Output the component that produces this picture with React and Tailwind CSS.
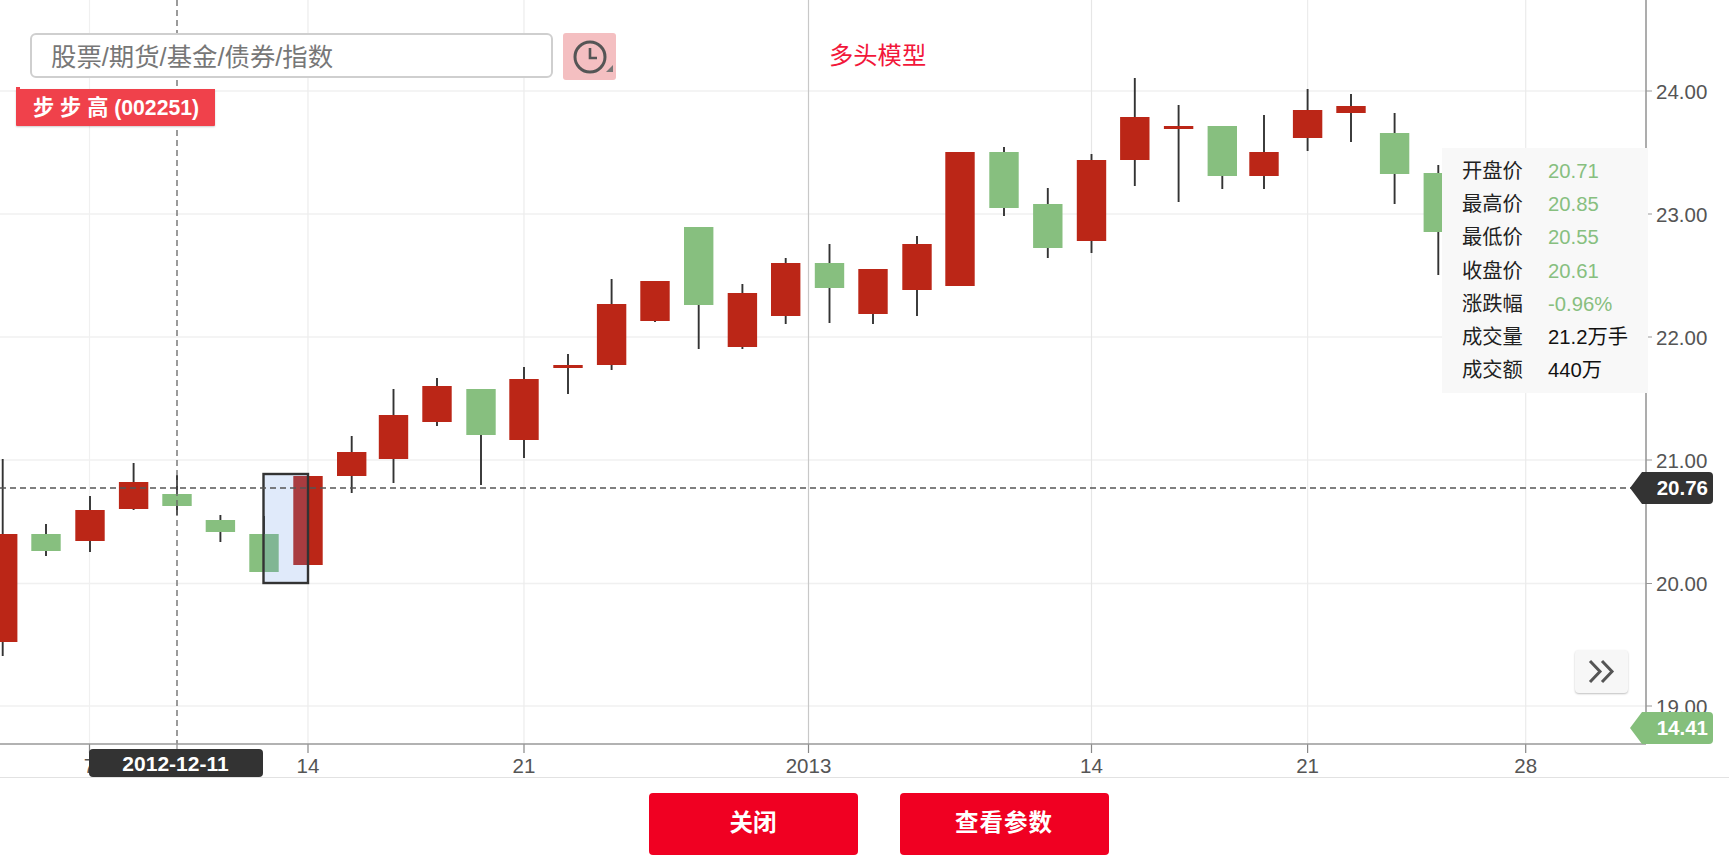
import React from 'react';

const RED = '#bb2617';
const GREEN = '#87bf7f';

// x, colour, body top, body bottom, wick top, wick bottom
const candles = [
    [2.7, RED, 534, 642, 459, 656],
    [46, GREEN, 534, 551, 524, 556],
    [90, RED, 510, 541, 496, 552],
    [133.6, RED, 482, 509, 463, 510],
    [177, GREEN, 494, 506, 475, 515],
    [220.4, GREEN, 520, 532, 515, 542],
    [264, GREEN, 534, 572, 516, 572],
    [308, RED, 476, 565, 476, 565],
    [351.7, RED, 452, 476, 436, 493],
    [393.5, RED, 415, 459, 389, 483],
    [437, RED, 386, 422, 378, 426],
    [481, GREEN, 389, 435, 389, 485],
    [524, RED, 379, 440, 367, 458],
    [568, RED, 365, 368, 354, 394],
    [611.6, RED, 304, 365, 279, 370],
    [655, RED, 281, 321, 281, 322],
    [698.7, GREEN, 227, 305, 227, 349],
    [742.4, RED, 293, 347, 284, 349],
    [785.7, RED, 263, 316, 258, 324],
    [829.5, GREEN, 263, 288, 244, 323],
    [873, RED, 269, 314, 269, 324],
    [917, RED, 244, 290, 236, 316],
    [960, RED, 152, 286, 152, 286],
    [1004, GREEN, 152, 208, 147, 216],
    [1047.8, GREEN, 204, 248, 188, 258],
    [1091.5, RED, 160, 241, 154, 253],
    [1134.8, RED, 117, 160, 78, 186],
    [1178.6, RED, 126, 129, 105, 202],
    [1222.3, GREEN, 126, 176, 126, 189],
    [1264, RED, 152, 176, 115, 189],
    [1307.6, RED, 110, 138, 89, 151],
    [1351, RED, 106, 113, 94, 142],
    [1394.6, GREEN, 133, 174, 113, 204],
    [1438.3, GREEN, 173, 232, 165, 275],
];

const priceLines = [
    [91, '24.00'],
    [214, '23.00'],
    [337, '22.00'],
    [460, '21.00'],
    [583.5, '20.00'],
    [706, '19.00'],
];

const dateLines = [
    [89.5, '7', '#f0f0f0'],
    [308, '14', '#ececec'],
    [524, '21', '#ececec'],
    [808.5, '2013', '#c8c8c8'],
    [1091.5, '14', '#e6e6e6'],
    [1307.6, '21', '#ececec'],
    [1525.7, '28', '#ececec'],
];

const quote = [
    ['开盘价', '20.71', true],
    ['最高价', '20.85', true],
    ['最低价', '20.55', true],
    ['收盘价', '20.61', true],
    ['涨跌幅', '-0.96%', true],
    ['成交量', '21.2万手', false],
    ['成交额', '440万', false],
];

const CandleChart = () => (
    <svg width="1729" height="778" className="block">
        {priceLines.map(([y]) => (
            <g key={y}>
                <line x1="0" x2="1646" y1={y} y2={y} stroke="#f0f0f0" strokeWidth="1.5" />
                <line x1="1646" x2="1652" y1={y} y2={y} stroke="#999" strokeWidth="1" />
            </g>
        ))}
        {dateLines.map(([x, , color]) => (
            <g key={x}>
                <line x1={x} x2={x} y1="0" y2="744" stroke={color} strokeWidth="1.2" />
                <line x1={x} x2={x} y1="744" y2="753" stroke="#888" strokeWidth="1.2" />
            </g>
        ))}
        <line x1="177" x2="177" y1="744" y2="753" stroke="#888" strokeWidth="1.2" />

        {candles.map(([x, color, top, bottom, wickTop, wickBottom]) => (
            <g key={x}>
                <line x1={x} x2={x} y1={wickTop} y2={wickBottom} stroke="#333" strokeWidth="1.9" />
                <rect x={x - 14.7} y={top} width="29.4" height={bottom - top} fill={color} />
            </g>
        ))}

        <rect x="263.5" y="474" width="44.5" height="109" fill="rgb(100 150 230 / 0.2)" stroke="#333" strokeWidth="2.4" />

        <line x1="177" x2="177" y1="0" y2="744" stroke="#666" strokeWidth="1.3" strokeDasharray="6 4" />
        <line x1="0" x2="1632" y1="488" y2="488" stroke="#555" strokeWidth="1.3" strokeDasharray="6 4" />

        <line x1="0" x2="1646" y1="744" y2="744" stroke="#999" strokeWidth="1.6" />
        <line x1="1646" x2="1646" y1="0" y2="744" stroke="#999" strokeWidth="1.6" />

        {priceLines.map(([y, label]) => (
            <text key={label} x="1656" y={y + 7.5} fontSize="20.5" fill="#555">{label}</text>
        ))}
        {dateLines.map(([x, label]) => (
            <text key={x} x={x} y="773" fontSize="20.5" fill="#555" textAnchor="middle">{label}</text>
        ))}
    </svg>
);

const PriceTag = ({ value, className }) => (
    <div className={`absolute left-[1630px] flex h-[32px] w-[83px] items-stretch ${className}`}>
        <svg width="16" height="32" className="shrink-0 fill-current">
            <polygon points="16,0 12,0 0,16 12,32 16,32" />
        </svg>
        <div className="flex flex-1 items-center justify-end rounded-r-[4px] bg-current pr-[5px]">
            <span className="text-[20.5px] font-bold leading-none text-white">{value}</span>
        </div>
    </div>
);

const App = () => {
    return (
        <div className="relative h-[864px] w-[1729px] overflow-hidden bg-white font-['Liberation_Sans','Noto_Sans_CJK_SC',sans-serif]">
            <div className="relative h-[778px] border-b border-[#e2e2e2]">
                <CandleChart />

                <div className="absolute left-[16px] top-[33px] flex flex-col items-start gap-[9px]">
                    <div className="ml-[14px] flex items-start gap-[10px]">
                        <input
                            readOnly
                            placeholder="股票/期货/基金/债券/指数"
                            className="h-[45px] w-[523px] rounded-[6px] border-2 border-[#cfcfcf] bg-white pl-[19px] pt-[3px] text-[25.4px] outline-none placeholder:text-[#777]"
                        />
                        <div className="relative flex h-[47px] w-[53px] items-center justify-center rounded-[3px] bg-[#f4bfc1] pl-[3px]">
                            <svg width="36" height="36" viewBox="0 0 36 36" fill="none" stroke="#555" strokeWidth="3">
                                <circle cx="17" cy="18" r="15" />
                                <path d="M17 9v10h7" strokeWidth="2.6" />
                            </svg>
                            <svg width="7" height="7" className="absolute bottom-[8px] right-[3px] fill-[#777]">
                                <polygon points="7,0 7,7 0,7" />
                            </svg>
                        </div>
                    </div>
                    <div className="relative flex h-[37px] w-[199px] items-center rounded-b-[1px] bg-[#f0414b] pl-[17px] shadow-[0_1px_2px_rgba(0,0,0,0.2)]">
                        <span className="absolute -top-[2px] left-0 h-[2px] w-[4px] bg-[#f0414b]" />
                        <span className="whitespace-pre text-[21.2px] font-bold text-white">步 步 高 (002251)</span>
                    </div>
                </div>

                <div className="absolute left-[829px] top-[40px] text-[24.3px] leading-[32px] text-[#f2173a]">多头模型</div>

                <div className="absolute left-[1442px] top-[148px] grid h-[245px] w-[206px] grid-cols-[86px_1fr] content-start bg-[#f8f8f8] pb-[6px] pl-[20px] pt-[7px] text-[20.3px] leading-[33.2px]">
                    {quote.map(([label, value, up]) => (
                        <React.Fragment key={label}>
                            <span className="text-[#222]">{label}</span>
                            <span className={up ? 'text-[#87bf7f]' : 'text-[#111]'}>{value}</span>
                        </React.Fragment>
                    ))}
                </div>

                <div className="absolute left-[89px] top-[749px] flex h-[28px] w-[174px] items-center justify-center rounded-[4px] bg-[#333] pr-[1px] text-[21px] font-bold leading-none text-white">
                    2012-12-11
                </div>

                <PriceTag value="20.76" className="top-[472px] text-[#333]" />
                <PriceTag value="14.41" className="top-[712px] text-[#85bf7c]" />

                <div className="absolute left-[1575px] top-[650px] flex h-[43px] w-[53px] items-center justify-center rounded-[4px] bg-[#f7f7f7] shadow-[0_1px_2px_rgba(0,0,0,0.25)]">
                    <svg width="27" height="25" viewBox="0 0 27 25" fill="none" stroke="#555" strokeWidth="3">
                        <polyline points="2,2 12,12.5 2,23" />
                        <polyline points="14,2 24,12.5 14,23" />
                    </svg>
                </div>
            </div>

            <div className="flex justify-center gap-[42px] pl-[28px] pt-[15px]">
                <button className="h-[62px] w-[209px] rounded-[4px] bg-[#f00022] text-[23.5px] font-bold text-white">关闭</button>
                <button className="h-[62px] w-[209px] rounded-[4px] bg-[#f00022] text-[23.5px] font-bold tracking-[1px] text-white">查看参数</button>
            </div>
        </div>
    );
};

export default App;
